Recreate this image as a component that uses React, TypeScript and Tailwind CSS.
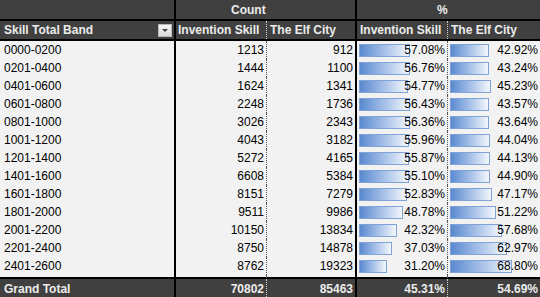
const rows: [string, number, number, number, number][] = [
  ['0000-0200', 1213, 912, 57.08, 42.92],
  ['0201-0400', 1444, 1100, 56.76, 43.24],
  ['0401-0600', 1624, 1341, 54.77, 45.23],
  ['0601-0800', 2248, 1736, 56.43, 43.57],
  ['0801-1000', 3026, 2343, 56.36, 43.64],
  ['1001-1200', 4043, 3182, 55.96, 44.04],
  ['1201-1400', 5272, 4165, 55.87, 44.13],
  ['1401-1600', 6608, 5384, 55.1, 44.9],
  ['1601-1800', 8151, 7279, 52.83, 47.17],
  ['1801-2000', 9511, 9986, 48.78, 51.22],
  ['2001-2200', 10150, 13834, 42.32, 57.68],
  ['2201-2400', 8750, 14878, 37.03, 62.97],
  ['2401-2600', 8762, 19323, 31.2, 68.8],
];

const cols = 'grid grid-cols-[176px_91px_90px_91px_92px]';

function BarCell({ value, last }: { value: number; last?: boolean }) {
  return (
    <div
      className={`relative flex items-center justify-end pr-[2px] ${
        last ? '' : 'border-r border-dotted border-[#555]'
      }`}
    >
      <div
        className="absolute left-[2px] top-[3px] h-[13px] border border-[#7fa3d6] bg-gradient-to-r from-[#5a89cf] to-[#f4f7fc]"
        style={{ width: `${value * 0.9}px` }}
      />
      <span className="relative">{value.toFixed(2)}%</span>
    </div>
  );
}

function FilterButton() {
  return (
    <div className="flex h-[13px] w-[14px] items-center justify-center border border-[#b8b8b8] bg-gradient-to-b from-[#f7f7f7] to-[#d9d9d9]">
      <div className="h-0 w-0 border-x-[3px] border-t-[3px] border-x-transparent border-t-[#404040]" />
    </div>
  );
}

export default function App() {
  return (
    <div
      className="h-[297px] w-[540px] overflow-hidden bg-[#f2f2f2] text-[12px] text-black"
      style={{ fontFamily: '"Liberation Sans", Arial, sans-serif' }}
    >
      {/* header row 1 */}
      <div className={`${cols} h-[21px] border-b-2 border-black bg-[#404040] font-bold text-[#ececec]`}>
        <div className="border-r-2 border-black" />
        <div className="col-span-2 flex items-center border-r-2 border-black pl-[55px]">Count</div>
        <div className="col-span-2 flex items-center pl-[80px]">%</div>
      </div>

      {/* header row 2 */}
      <div className={`${cols} h-[20px] border-b-2 border-black bg-[#404040] font-bold text-[#ececec]`}>
        <div className="flex items-center justify-between border-r-2 border-black pl-[4px] pr-[2px]">
          <span>Skill Total Band</span>
          <FilterButton />
        </div>
        <div className="flex items-center border-r border-dotted border-[#cfcfcf] pl-[2px]">Invention Skill</div>
        <div className="flex items-center border-r-2 border-black pl-[3px]">The Elf City</div>
        <div className="flex items-center border-r border-dotted border-[#cfcfcf] pl-[3px]">Invention Skill</div>
        <div className="flex items-center pl-[3px]">The Elf City</div>
      </div>

      {/* data */}
      {rows.map(([band, inv, elf, pInv, pElf]) => (
        <div key={band} className={`${cols} h-[18px]`}>
          <div className="flex items-center border-r-2 border-black pl-[4px]">{band}</div>
          <div className="flex items-center justify-end border-r border-dotted border-[#555] pr-[2px]">{inv}</div>
          <div className="flex items-center justify-end border-r-2 border-black pr-[2px]">{elf}</div>
          <BarCell value={pInv} />
          <BarCell value={pElf} last />
        </div>
      ))}
      <div className={`${cols} h-[2px]`}>
        <div className="border-r-2 border-black" />
        <div className="border-r border-dotted border-[#555]" />
        <div className="border-r-2 border-black" />
        <div className="border-r border-dotted border-[#555]" />
        <div />
      </div>

      {/* grand total */}
      <div className={`${cols} h-[22px] border-t-2 border-black bg-[#404040] font-bold text-[#ececec]`}>
        <div className="flex items-center border-r-2 border-black pl-[4px]">Grand Total</div>
        <div className="flex items-center justify-end border-r border-dotted border-[#cfcfcf] pr-[2px]">70802</div>
        <div className="flex items-center justify-end border-r-2 border-black pr-[2px]">85463</div>
        <div className="flex items-center justify-end border-r border-dotted border-[#cfcfcf] pr-[2px]">45.31%</div>
        <div className="flex items-center justify-end pr-[2px]">54.69%</div>
      </div>
    </div>
  );
}
